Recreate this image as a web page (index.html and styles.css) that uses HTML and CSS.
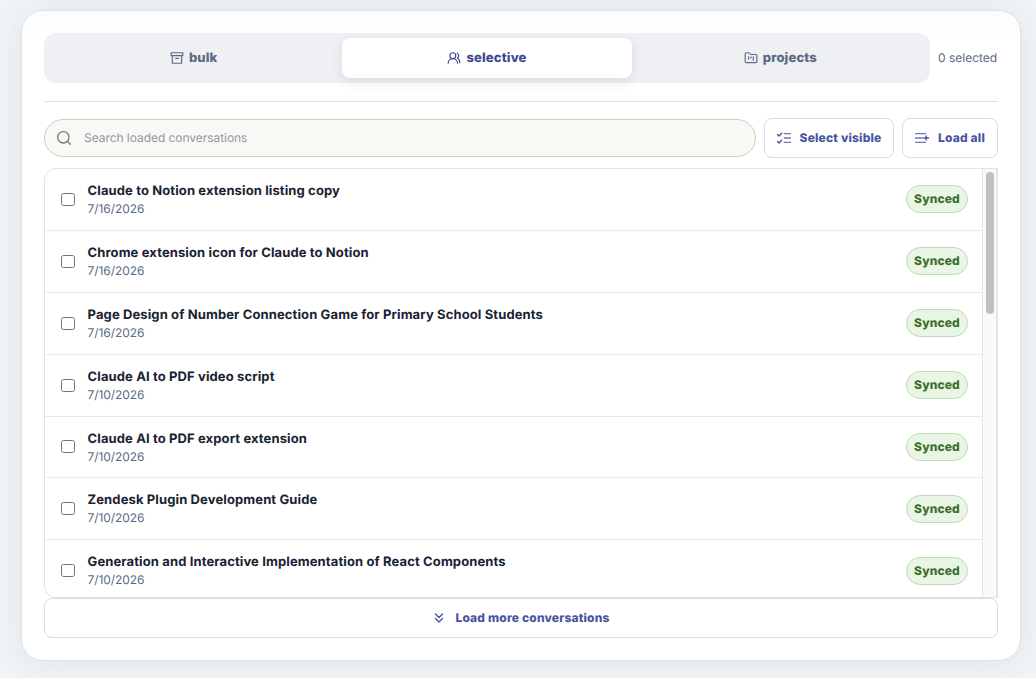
FILE: index.html
```
<!DOCTYPE html>
<html lang="en">
<head>
<meta charset="utf-8">
<title>Conversations</title>
<link rel="stylesheet" href="styles.css">
</head>
<body>
<main class="card">
  <header class="top">
    <nav class="tabs">
      <button class="tab"><svg class="icon" viewBox="0 0 24 24"><path d="M2 3h20v5H2zM4 8v13h16V8M9.500 12.500h5"/></svg>bulk</button>
      <button class="tab active"><svg class="icon" viewBox="0 0 24 24"><circle cx="10" cy="8" r="5"/><path d="M18 21a8 8 0 0 0-16 0M22 20c0-3.370-2-6.500-4-8a5 5 0 0 0-.45-8.300"/></svg>selective</button>
      <button class="tab"><svg class="icon" viewBox="0 0 24 24"><path d="M4 20h16a2 2 0 0 0 2-2V8a2 2 0 0 0-2-2h-7.930a2 2 0 0 1-1.660-.9l-.82-1.200A2 2 0 0 0 7.930 3H4a2 2 0 0 0-2 2v13c0 1.100.9 2 2 2ZM8 10v4M12 10v2M16 10v6"/></svg>projects</button>
    </nav>
    <span class="count">0 selected</span>
  </header>
  <section class="toolbar">
    <label class="search"><svg class="search-icon" viewBox="0 0 24 24"><circle cx="11" cy="11" r="8.500"/><path d="m21.500 21.500-4.500-4.500"/></svg><input class="search-input" type="text" placeholder="Search loaded conversations"></label>
    <button class="btn"><svg class="icon" viewBox="0 0 24 24"><path d="m1 18 2.500 2.500L8 16M1 6l2.500 2.500L8 4"/><path class="soft" d="M12.500 4.500H23M12.500 12H23M12.500 19.500H23"/></svg>Select visible</button>
    <button class="btn"><svg class="icon" viewBox="0 0 24 24"><path class="soft" d="M1 4.500h17M1 12h12M1 19.500h17"/><path d="M15 12h8M19 8.500v7"/></svg>Load all</button>
  </section>
  <section class="list">
    <div class="rows">
      <div class="row"><span class="check"></span><div class="info"><div class="title">Claude to Notion extension listing copy</div><div class="date">7/16/2026</div></div><span class="badge">Synced</span></div>
      <div class="row"><span class="check"></span><div class="info"><div class="title">Chrome extension icon for Claude to Notion</div><div class="date">7/16/2026</div></div><span class="badge">Synced</span></div>
      <div class="row"><span class="check"></span><div class="info"><div class="title">Page Design of Number Connection Game for Primary School Students</div><div class="date">7/16/2026</div></div><span class="badge">Synced</span></div>
      <div class="row"><span class="check"></span><div class="info"><div class="title">Claude AI to PDF video script</div><div class="date">7/10/2026</div></div><span class="badge">Synced</span></div>
      <div class="row"><span class="check"></span><div class="info"><div class="title">Claude AI to PDF export extension</div><div class="date">7/10/2026</div></div><span class="badge">Synced</span></div>
      <div class="row"><span class="check"></span><div class="info"><div class="title">Zendesk Plugin Development Guide</div><div class="date">7/10/2026</div></div><span class="badge">Synced</span></div>
      <div class="row"><span class="check"></span><div class="info"><div class="title">Generation and Interactive Implementation of React Components</div><div class="date">7/10/2026</div></div><span class="badge">Synced</span></div>
    </div>
    <div class="track"><div class="thumb"></div></div>
  </section>
  <button class="btn more"><svg class="icon" viewBox="0 0 24 24"><path d="m6 5 6 6 6-6M6 13l6 6 6-6"/></svg>Load more conversations</button>
</main>
</body>
</html>
```

FILE: styles.css
```
* { box-sizing: border-box; }

body {
  margin: 0;
  height: 678px;
  overflow: hidden;
  padding: 10px 15px 0 21px;
  background: #f1f5f8;
  font-family: Inter, sans-serif;
  font-size: 13px;
  text-rendering: geometricPrecision;
}

button {
  font: inherit;
  text-rendering: inherit;
  border: 0;
  background: none;
  padding: 0;
}

.card {
  height: 651px;
  padding: 22px 22px 0;
  border: 1px solid #dce2ec;
  border-radius: 22px;
  background: linear-gradient(#fcfcfd, #fff 30px);
  box-shadow: 0 2px 36px rgba(60, 70, 70, 0.1);
}

.top {
  display: flex;
  align-items: center;
  gap: 8px;
  height: 69px;
  padding-bottom: 18px;
  border-bottom: 1px solid #dde1e9;
}

.tabs {
  flex: 0 0 886px;
  display: grid;
  grid-template-columns: repeat(3, 1fr);
  gap: 4px;
  height: 50px;
  padding: 5px;
  border-radius: 12px;
  background: #eff0f4;
}

.tab {
  display: flex;
  align-items: center;
  justify-content: center;
  gap: 5px;
  padding-bottom: 1px;
  border-radius: 8px;
  color: #5a6b83;
  font-weight: 800;
  letter-spacing: 0.15px;
}

.tab.active {
  background: #fff;
  color: #3f4b91;
  box-shadow: 0 4px 12px rgba(30, 41, 70, 0.1);
}

.icon {
  width: 14px;
  height: 14px;
}

.icon, .search-icon {
  flex: none;
  fill: none;
  stroke: currentColor;
  stroke-width: 2;
  stroke-linecap: round;
  stroke-linejoin: round;
}

.btn .icon { stroke-width: 2.4; }

.soft { opacity: 0.8; }

.count {
  padding-bottom: 1px;
  color: #5a6b83;
  font-size: 12px;
  white-space: nowrap;
}

.toolbar {
  display: flex;
  align-items: center;
  gap: 8px;
  padding: 16px 0 10px;
}

.search {
  flex: 1;
  display: flex;
  align-items: center;
  gap: 12px;
  height: 38px;
  padding: 0 11px;
  border: 1px solid #cfccbd;
  border-radius: 19px;
  background: #f9f8f5;
}

.search-icon {
  width: 16px;
  height: 16px;
  color: #6c8373;
}

.search-input {
  flex: 1;
  border: 0;
  padding: 0 0 2px;
  outline: 0;
  background: none;
  font: 12px Inter, sans-serif;
  letter-spacing: -0.05px;
  text-rendering: inherit;
}

.search-input::placeholder { color: #9299a4; }

.btn {
  display: flex;
  align-items: center;
  justify-content: center;
  gap: 9px;
  width: 130px;
  height: 40px;
  padding-bottom: 1px;
  border: 1px solid #d7dce8;
  border-radius: 8px;
  background: #fff;
  color: #4856a0;
  font-size: 12px;
  font-weight: 800;
  letter-spacing: 0.18px;
}

.btn + .btn { width: 96px; }

.list {
  display: flex;
  height: 430px;
  overflow: hidden;
  border: 1px solid #dfe3eb;
  border-radius: 12px 0 0 12px;
}

.rows { flex: 1; }

.row {
  display: flex;
  align-items: center;
  height: 61.88px;
  padding: 0 14px 0 16px;
  border-bottom: 1px solid #e7eaf1;
}

.check {
  width: 14px;
  height: 13px;
  margin-right: 12.5px;
  border: 1px solid #767676;
  border-radius: 2.5px;
  background: #fff;
}

.info {
  flex: 1;
  padding-top: 1.2px;
}

.title {
  color: #192331;
  font-weight: 700;
  line-height: 18px;
  letter-spacing: 0.12px;
}

.date {
  color: #5a6b83;
  font-size: 12px;
  line-height: 18px;
  letter-spacing: -0.07px;
}

.badge {
  width: 62px;
  height: 28px;
  border: 1px solid #bddbb7;
  border-radius: 14px;
  background: #e9f5e5;
  color: #3d6f2a;
  font-size: 12px;
  font-weight: 800;
  letter-spacing: 0.15px;
  line-height: 26px;
  text-align: center;
}

.track {
  width: 15px;
  padding: 3px 2px 0 3px;
  border-left: 1px solid #e5e5e7;
  border-right: 1px solid #e8e8ea;
  background: #f9f9f9;
}

.thumb {
  width: 8px;
  height: 142px;
  border-radius: 4px;
  background: #bfbfbf;
}

.more { width: 100%; }
```
